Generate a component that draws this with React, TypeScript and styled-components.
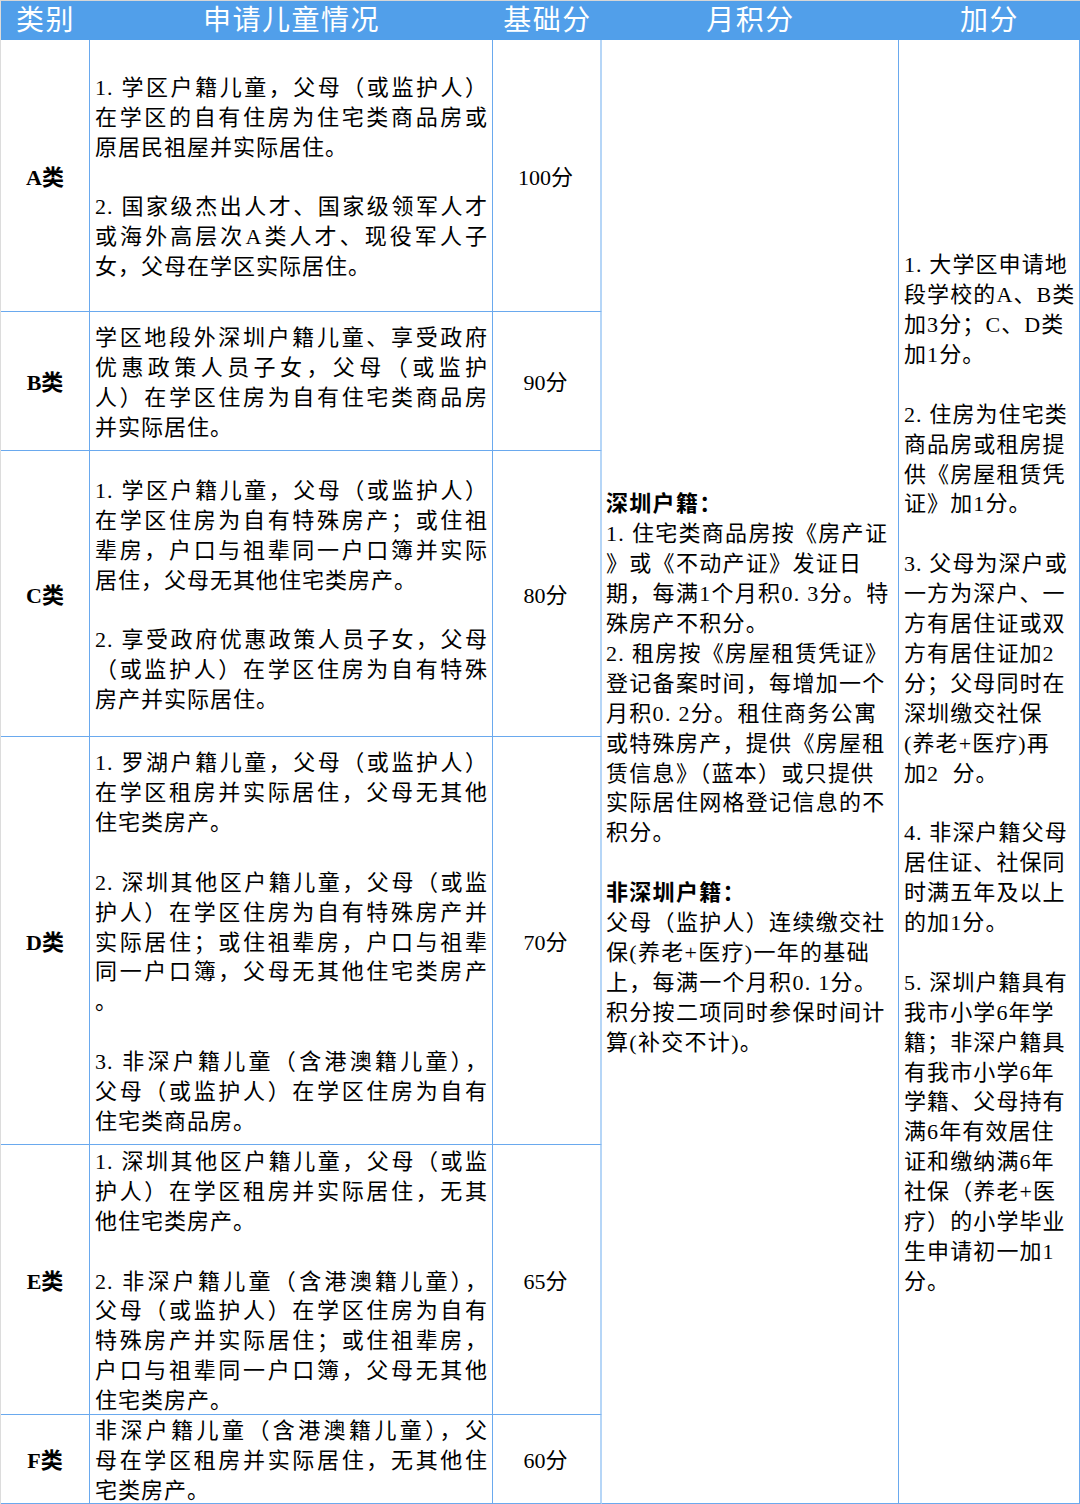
import React from "react";
import styled, { createGlobalStyle } from "styled-components";

const GlobalStyle = createGlobalStyle`
  html, body { margin: 0; padding: 0; background: #ffffff; }
  body { font-family: "Liberation Serif", "Noto Sans CJK SC", serif; color: #000; }
  #root { width: 1080px; }
`;

const BLUE = "#6aa9ee";
const LIGHT = "#b6d6f7";
const FONT = `"Liberation Serif", "Noto Sans CJK SC", serif`;

const Table = styled.div`
  width: 1080px;
  box-sizing: border-box;
  border-top: 1px solid #d6d6d6;
  border-left: 1px solid #dcdcdc;
  display: grid;
  grid-template-columns: 89px 403px 109px 297px 181px;
  grid-template-rows: 39px 272px 139px 286px 408px 270px 89px;
  font-family: ${FONT};
`;

const HeaderCell = styled.div`
  background: #519fea;
  color: #ffffff;
  font-size: 28px;
  line-height: 40px;
  text-align: center;
  letter-spacing: 1.5px;
  white-space: nowrap;
`;

const BaseCell = styled.div`
  box-sizing: border-box;
  border-bottom: 1px solid ${BLUE};
  display: flex;
  flex-direction: column;
  justify-content: center;
  min-height: 0;
  padding-top: 4px;
  font-size: 22px;
  line-height: 29.9px;
`;

const CategoryCell = styled(BaseCell)`
  border-right: 1px solid ${BLUE};
  align-items: center;
  font-weight: 700;
`;

const DetailCell = styled(BaseCell)`
  border-right: 1px solid ${BLUE};
  padding-left: 5px;
  padding-right: 4px;
`;

const ScoreCell = styled(BaseCell)`
  border-right: 2px solid ${LIGHT};
  align-items: center;
  padding-right: 2px;
`;

const SpanCell = styled(BaseCell)<{ $padLeft: number; $spacing: number }>`
  grid-row: span 6;
  border-right: 1px solid ${BLUE};
  padding-left: ${(p) => p.$padLeft}px;
  letter-spacing: ${(p) => p.$spacing}px;
`;

const Line = styled.div<{ $justify?: boolean }>`
  min-height: 29.9px;
  letter-spacing: 1px;
  text-align: ${(p) => (p.$justify ? "justify" : "left")};
  text-align-last: ${(p) => (p.$justify ? "justify" : "left")};
`;

const FreeLine = styled.div<{ $bold?: boolean }>`
  min-height: 29.9px;
  white-space: pre;
  font-weight: ${(p) => (p.$bold ? 700 : 400)};
`;

type Row = { cat: string; score: string; lines: string[] };

const rows: Row[] = [
  {
    cat: "A类",
    score: "100分",
    lines: [
      "1. 学区户籍儿童，父母（或监护人）",
      "在学区的自有住房为住宅类商品房或",
      "原居民祖屋并实际居住。",
      "",
      "2. 国家级杰出人才、国家级领军人才",
      "或海外高层次A类人才、现役军人子",
      "女，父母在学区实际居住。",
    ],
  },
  {
    cat: "B类",
    score: "90分",
    lines: [
      "学区地段外深圳户籍儿童、享受政府",
      "优惠政策人员子女，父母（或监护",
      "人）在学区住房为自有住宅类商品房",
      "并实际居住。",
    ],
  },
  {
    cat: "C类",
    score: "80分",
    lines: [
      "1. 学区户籍儿童，父母（或监护人）",
      "在学区住房为自有特殊房产；或住祖",
      "辈房，户口与祖辈同一户口簿并实际",
      "居住，父母无其他住宅类房产。",
      "",
      "2. 享受政府优惠政策人员子女，父母",
      "（或监护人）在学区住房为自有特殊",
      "房产并实际居住。",
    ],
  },
  {
    cat: "D类",
    score: "70分",
    lines: [
      "1. 罗湖户籍儿童，父母（或监护人）",
      "在学区租房并实际居住，父母无其他",
      "住宅类房产。",
      "",
      "2. 深圳其他区户籍儿童，父母（或监",
      "护人）在学区住房为自有特殊房产并",
      "实际居住；或住祖辈房，户口与祖辈",
      "同一户口簿，父母无其他住宅类房产",
      "。",
      "",
      "3. 非深户籍儿童（含港澳籍儿童），",
      "父母（或监护人）在学区住房为自有",
      "住宅类商品房。",
    ],
  },
  {
    cat: "E类",
    score: "65分",
    lines: [
      "1. 深圳其他区户籍儿童，父母（或监",
      "护人）在学区租房并实际居住，无其",
      "他住宅类房产。",
      "",
      "2. 非深户籍儿童（含港澳籍儿童），",
      "父母（或监护人）在学区住房为自有",
      "特殊房产并实际居住；或住祖辈房，",
      "户口与祖辈同一户口簿，父母无其他",
      "住宅类房产。",
    ],
  },
  {
    cat: "F类",
    score: "60分",
    lines: [
      "非深户籍儿童（含港澳籍儿童），父",
      "母在学区租房并实际居住，无其他住",
      "宅类房产。",
    ],
  },
];

const monthly: { t: string; b?: boolean }[] = [
  { t: "深圳户籍：", b: true },
  { t: "1. 住宅类商品房按《房产证" },
  { t: "》或《不动产证》发证日" },
  { t: "期，每满1个月积0. 3分。特" },
  { t: "殊房产不积分。" },
  { t: "2. 租房按《房屋租赁凭证》" },
  { t: "登记备案时间，每增加一个" },
  { t: "月积0. 2分。租住商务公寓" },
  { t: "或特殊房产，提供《房屋租" },
  { t: "赁信息》（蓝本）或只提供" },
  { t: "实际居住网格登记信息的不" },
  { t: "积分。" },
  { t: "" },
  { t: "非深圳户籍：", b: true },
  { t: "父母（监护人）连续缴交社" },
  { t: "保(养老+医疗)一年的基础" },
  { t: "上，每满一个月积0. 1分。" },
  { t: "积分按二项同时参保时间计" },
  { t: "算(补交不计)。" },
];

const bonus: string[] = [
  "1. 大学区申请地",
  "段学校的A、B类",
  "加3分；C、D类",
  "加1分。",
  "",
  "2. 住房为住宅类",
  "商品房或租房提",
  "供《房屋租赁凭",
  "证》加1分。",
  "",
  "3. 父母为深户或",
  "一方为深户、一",
  "方有居住证或双",
  "方有居住证加2",
  "分；父母同时在",
  "深圳缴交社保",
  "(养老+医疗)再",
  "加2  分。",
  "",
  "4. 非深户籍父母",
  "居住证、社保同",
  "时满五年及以上",
  "的加1分。",
  "",
  "5. 深圳户籍具有",
  "我市小学6年学",
  "籍；非深户籍具",
  "有我市小学6年",
  "学籍、父母持有",
  "满6年有效居住",
  "证和缴纳满6年",
  "社保（养老+医",
  "疗）的小学毕业",
  "生申请初一加1",
  "分。",
];

const headers = ["类别", "申请儿童情况", "基础分", "月积分", "加分"];

function DetailLines({ lines }: { lines: string[] }) {
  return (
    <>
      {lines.map((l, i) => {
        const next = lines[i + 1];
        const justify = l !== "" && next !== undefined && next !== "";
        return (
          <Line key={i} $justify={justify}>
            {l}
          </Line>
        );
      })}
    </>
  );
}

export default function App() {
  return (
    <>
      <GlobalStyle />
      <Table>
        {headers.map((h) => (
          <HeaderCell key={h}>{h}</HeaderCell>
        ))}
        {rows.map((r, idx) => (
          <React.Fragment key={r.cat}>
            <CategoryCell>{r.cat}</CategoryCell>
            <DetailCell>
              <DetailLines lines={r.lines} />
            </DetailCell>
            <ScoreCell>{r.score}</ScoreCell>
            {idx === 0 && (
              <>
                <SpanCell $padLeft={4} $spacing={1.3}>
                  {monthly.map((m, i) => (
                    <FreeLine key={i} $bold={m.b}>
                      {m.t}
                    </FreeLine>
                  ))}
                </SpanCell>
                <SpanCell $padLeft={5} $spacing={1.1}>
                  {bonus.map((b, i) => (
                    <FreeLine key={i}>{b}</FreeLine>
                  ))}
                </SpanCell>
              </>
            )}
          </React.Fragment>
        ))}
      </Table>
    </>
  );
}
